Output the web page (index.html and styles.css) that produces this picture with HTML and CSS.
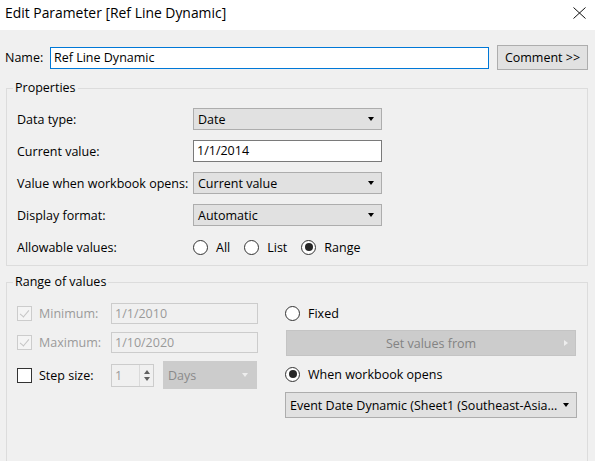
FILE: index.html
```html
<!DOCTYPE html>
<html lang="en">
<head>
    <meta charset="UTF-8">
    <title>Edit Parameter</title>
    <link rel="stylesheet" href="styles.css">
</head>
<body>
    <div class="titlebar">
        <span class="title">Edit Parameter [Ref Line Dynamic]</span>
        <svg class="close" width="13" height="12" viewBox="0 0 13 12">
            <path d="M0.5 0.5L12.5 11.5M12.5 0.5L0.5 11.5" stroke="#111" stroke-width="1" fill="none"/>
        </svg>
    </div>
    <div class="dialog">
        <div class="name-row">
            <span class="name-label">Name:</span>
            <div class="name-input">Ref Line Dynamic</div>
            <div class="btn">Comment &gt;&gt;</div>
        </div>

        <fieldset class="group">
            <legend>Properties</legend>
            <div class="group-body props">
                <span class="prop-label">Data type:</span>
                <div class="select">Date<span class="arrow"></span></div>

                <span class="prop-label">Current value:</span>
                <div class="textbox">1/1/2014</div>

                <span class="prop-label">Value when workbook opens:</span>
                <div class="select">Current value<span class="arrow"></span></div>

                <span class="prop-label">Display format:</span>
                <div class="select">Automatic<span class="arrow"></span></div>

                <span class="prop-label">Allowable values:</span>
                <div class="radios">
                    <span class="radio-item"><span class="radio"></span>All</span>
                    <span class="radio-item"><span class="radio"></span>List</span>
                    <span class="radio-item"><span class="radio checked"></span>Range</span>
                </div>
            </div>
        </fieldset>

        <fieldset class="group range">
            <legend>Range of values</legend>
            <div class="group-body range-body">
                <div class="range-left">
                    <div class="range-row">
                        <span class="check disabled"></span>
                        <span class="range-label muted">Minimum:</span>
                        <div class="textbox disabled">1/1/2010</div>
                    </div>
                    <div class="range-row row-max">
                        <span class="check disabled"></span>
                        <span class="range-label muted">Maximum:</span>
                        <div class="textbox disabled">1/10/2020</div>
                    </div>
                    <div class="range-row row-step">
                        <span class="check"></span>
                        <span class="range-label">Step size:</span>
                        <div class="spin">
                            <span class="spin-value">1</span>
                            <span class="spin-arrows">
                                <span class="up"></span>
                                <span class="down"></span>
                            </span>
                        </div>
                        <div class="select disabled days">Days<span class="arrow"></span></div>
                    </div>
                </div>
                <div class="range-right">
                    <div class="radio-row">
                        <span class="radio-item"><span class="radio"></span>Fixed</span>
                    </div>
                    <div class="set-btn">Set values from<span class="tri-right"></span></div>
                    <div class="radio-row row-open">
                        <span class="radio-item"><span class="radio checked"></span>When workbook opens</span>
                    </div>
                    <div class="select source">Event Date Dynamic (Sheet1 (Southeast-Asia...<span class="arrow"></span></div>
                </div>
            </div>
        </fieldset>
    </div>
</body>
</html>
```

FILE: styles.css
```css
html, body {
    margin: 0;
    height: 100%;
    overflow: hidden;
}
body {
    font-family: "Open Sans", "Noto Sans", sans-serif;
    font-size: 12.5px;
    color: #000;
    background-color: #f0f0f0;
}
.titlebar {
    height: 30px;
    background: #ffffff;
    display: flex;
    justify-content: space-between;
    align-items: flex-start;
    padding: 4px 9px 0 5px;
    box-sizing: border-box;
}
.title {
    font-size: 13.9px;
    line-height: 18px;
}
.close {
    margin-top: 3px;
}
.dialog {
    padding: 15px 7px 0 5px;
}
.name-row {
    display: flex;
    align-items: center;
    height: 25px;
}
.name-label {
    width: 45px;
}
.name-input {
    width: 439px;
    height: 22px;
    box-sizing: border-box;
    border: 1px solid #0078d7;
    background: #fff;
    padding-left: 3px;
    line-height: 20px;
}
.btn {
    margin-left: 8px;
    width: 91px;
    height: 25px;
    box-sizing: border-box;
    border: 1px solid #adadad;
    background: #e1e1e1;
    text-align: center;
    line-height: 23px;
}
.group {
    border: 1px solid #dcdcdc;
    margin: 10px 0 0 1px;
    padding: 0;
    min-width: 0;
}
.group legend {
    margin-left: 6px;
    padding: 0 2px;
    line-height: 16px;
}
.group-body {
    padding: 12px 10px 7px 10px;
}
.props {
    display: grid;
    grid-template-columns: 176px 189px;
    grid-auto-rows: 22px;
    row-gap: 10px;
    align-items: center;
}
.select {
    height: 22px;
    box-sizing: border-box;
    border: 1px solid #adadad;
    background: #e1e1e1;
    display: flex;
    align-items: center;
    justify-content: space-between;
    padding: 0 7px 0 4px;
    white-space: nowrap;
}
.arrow {
    width: 0;
    height: 0;
    border-left: 3.5px solid transparent;
    border-right: 3.5px solid transparent;
    border-top: 4px solid #000;
}
.textbox {
    height: 22px;
    box-sizing: border-box;
    border: 1px solid #7a7a7a;
    background: #fff;
    padding-left: 3px;
    line-height: 20px;
}
.radios {
    display: flex;
    align-items: center;
    gap: 14px;
}
.radio-item {
    display: flex;
    align-items: center;
}
.radio {
    width: 15px;
    height: 15px;
    box-sizing: border-box;
    border: 1px solid #333;
    border-radius: 50%;
    background: #fff;
    margin-right: 8px;
    position: relative;
}
.radio.checked::after {
    content: "";
    position: absolute;
    left: 2.5px;
    top: 2.5px;
    width: 8px;
    height: 8px;
    border-radius: 50%;
    background: #262626;
}
.range {
    margin-top: 8px;
}
.range-body {
    display: flex;
    padding-top: 12px;
    height: 200px;
}
.range-left {
    width: 258px;
}
.range-row {
    display: flex;
    align-items: center;
    height: 22px;
}
.row-max {
    margin-top: 7px;
}
.row-step {
    margin-top: 11px;
}
.check {
    width: 15px;
    height: 15px;
    box-sizing: border-box;
    border: 1px solid #333;
    background: #fff;
    position: relative;
}
.check.disabled {
    border-color: #cccccc;
    background: #f4f4f4;
}
.check.disabled::after {
    content: "";
    position: absolute;
    left: 4px;
    top: 1px;
    width: 4px;
    height: 8px;
    border-right: 1px solid #c4c4c4;
    border-bottom: 1px solid #c4c4c4;
    transform: rotate(40deg);
}
.range-label {
    margin-left: 7px;
    width: 72px;
}
.muted {
    color: #9a9a9a;
}
.textbox.disabled {
    width: 147px;
    height: 21px;
    border-color: #cccccc;
    background: #f0f0f0;
    color: #9a9a9a;
    line-height: 19px;
}
.spin {
    width: 43px;
    height: 23px;
    box-sizing: border-box;
    border: 1px solid #cccccc;
    display: flex;
    color: #9a9a9a;
}
.spin-value {
    flex: 1;
    padding-left: 3px;
    line-height: 21px;
}
.spin-arrows {
    width: 13px;
    display: flex;
    flex-direction: column;
    justify-content: center;
    align-items: center;
    gap: 3px;
    border-left: 1px solid #dadada;
    background: #f0f0f0;
}
.spin-arrows .up {
    border-left: 3.5px solid transparent;
    border-right: 3.5px solid transparent;
    border-bottom: 4px solid #606060;
}
.spin-arrows .down {
    border-left: 3.5px solid transparent;
    border-right: 3.5px solid transparent;
    border-top: 4px solid #606060;
}
.days {
    margin-left: 9px;
    width: 94px;
    height: 28px;
    background: #cccccc;
    border-color: #cccccc;
    color: #8a8a8a;
    padding-right: 8px;
}
.days .arrow {
    border-top-color: #eeeeee;
}
.range-right {
    margin-left: 10px;
    width: 292px;
}
.radio-row {
    display: flex;
    align-items: center;
    height: 22px;
}
.set-btn {
    margin: 6px 1px 0 1px;
    height: 26px;
    box-sizing: border-box;
    border: 1px solid #c4c4c4;
    background: #cccccc;
    color: #838383;
    display: flex;
    align-items: center;
    justify-content: center;
    position: relative;
}
.tri-right {
    position: absolute;
    right: 7px;
    top: 9px;
    border-top: 3.5px solid transparent;
    border-bottom: 3.5px solid transparent;
    border-left: 4px solid #eeeeee;
}
.row-open {
    margin-top: 7px;
}
.source {
    margin-top: 7px;
    height: 26px;
}
```
